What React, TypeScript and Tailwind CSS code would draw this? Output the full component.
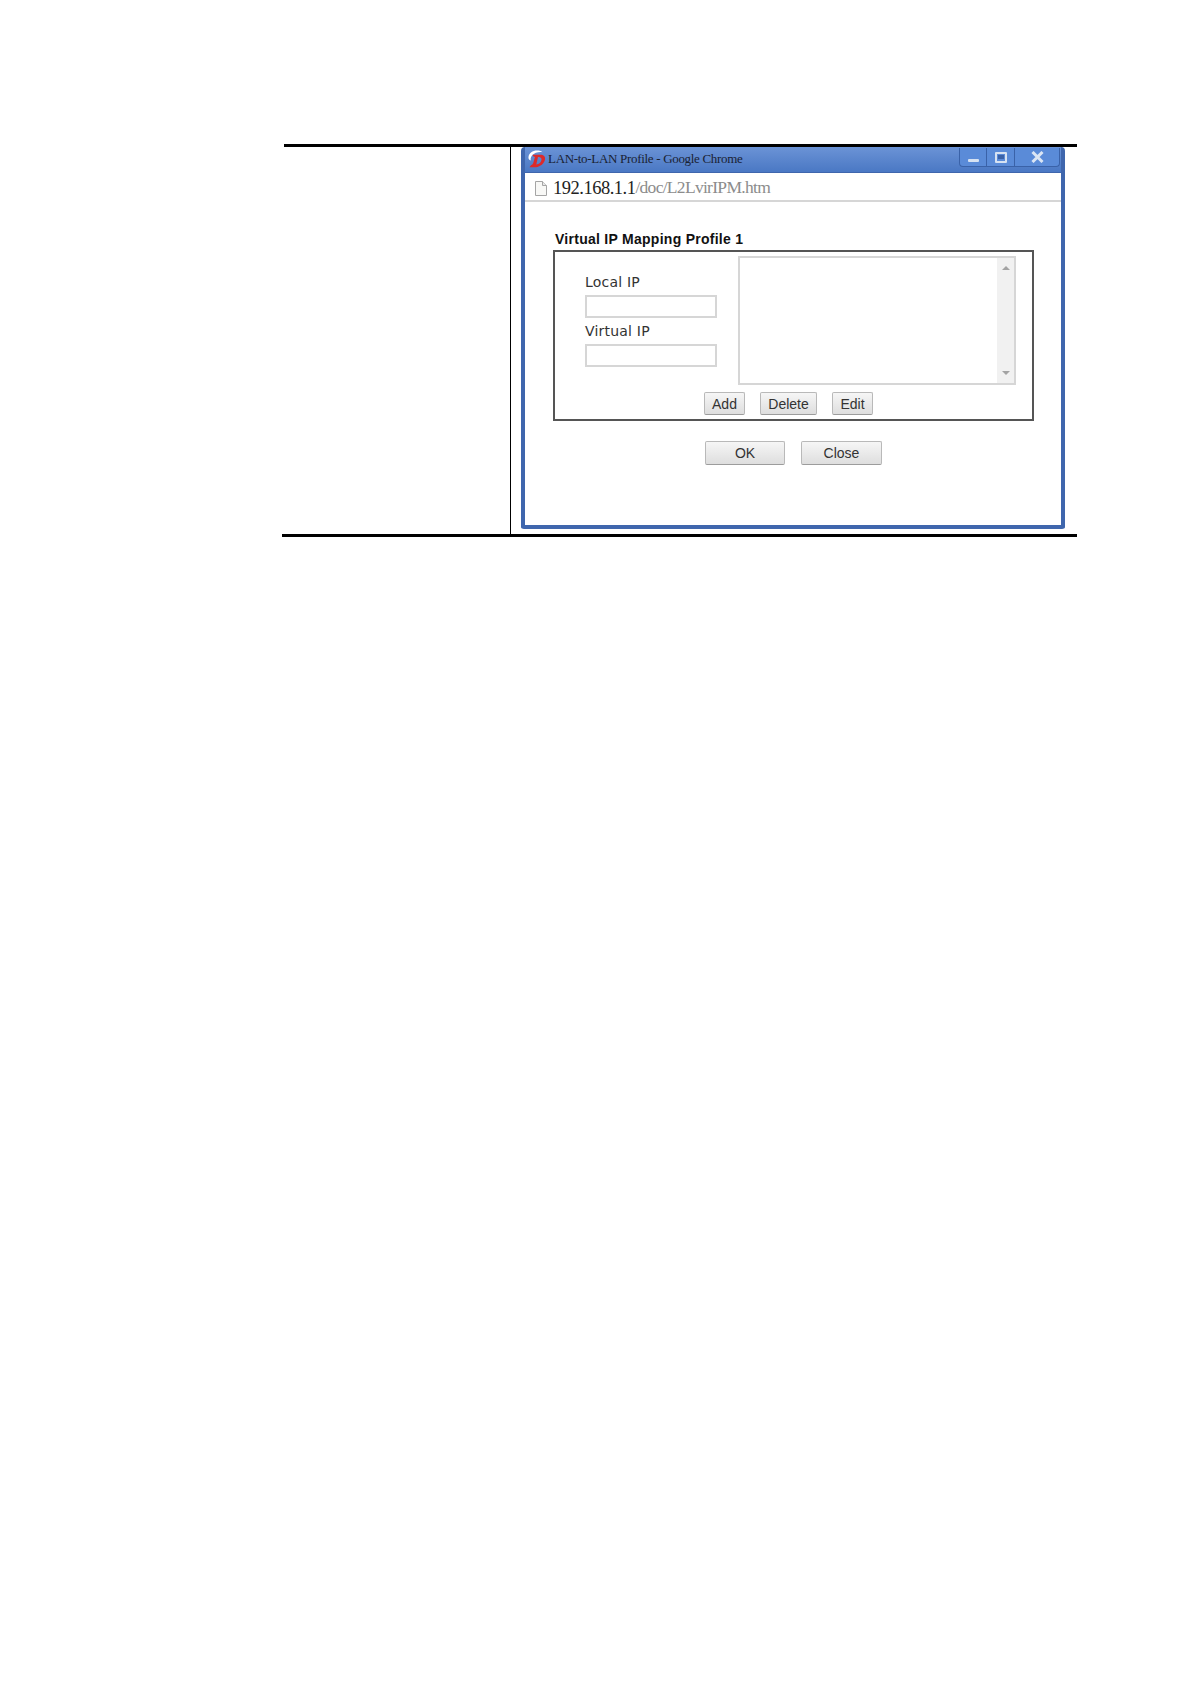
export default function App() {
  return (
    <div className="min-h-[1684px] w-[1190px] bg-white pt-[144px] pl-[282px] font-['Liberation_Sans',sans-serif]">
      <div className="w-[795px]">
        <div className="ml-[2px] h-[3px] bg-black" />
        <div className="flex h-[387px]">
          <div className="w-[229px] border-r border-black" />
          <div className="pl-[10px]">
            <ChromeWindow />
          </div>
        </div>
        <div className="h-[3px] bg-black" />
      </div>
    </div>
  );
}

function ChromeWindow() {
  return (
    <div className="flex h-[382px] w-[544px] flex-col rounded-t-[4px] rounded-b-[3px] border-x-[4px] border-b-[4px] border-[#3f66ad] bg-white">
      <TitleBar />
      <div className="flex h-[29px] items-center border-b-2 border-[#d6d6d6] bg-white pt-[3px] pl-[9px]">
        <svg width="14" height="17" viewBox="0 0 14 17" className="mr-[5px]">
          <path d="M1.5 1.5h7l4 4v10h-11z" fill="#f8f8f6" stroke="#a5a5a5" />
          <path d="M8.5 1.5v4h4" fill="#e8e8e8" stroke="#a5a5a5" />
        </svg>
        <span className="font-['Liberation_Serif',serif] text-[18.5px] leading-none tracking-[-0.5px] text-[#222]">192.168.1.1</span>
        <span className="font-['Liberation_Serif',serif] text-[17.5px] leading-none tracking-[-0.7px] text-[#8c8c8c]">/doc/L2LvirIPM.htm</span>
      </div>
      <div className="flex-1 pl-[28px]">
        <h2 className="mt-[29px] pl-[2px] text-[14px] leading-[16px] font-bold tracking-[0.27px] text-[#111]">Virtual IP Mapping Profile 1</h2>
        <ProfileBox />
        <div className="mt-[20px] flex gap-[16px] pl-[152px]">
          <PageButton label="OK" width="w-[80px]" />
          <PageButton label="Close" width="w-[81px]" />
        </div>
      </div>
    </div>
  );
}

function TitleBar() {
  return (
    <div className="flex h-[26px] items-start border-b border-[#3f66ad] bg-gradient-to-b from-[#6b93d6] to-[#4a78c4]">
      <svg width="20" height="20" viewBox="0 0 20 20" className="mt-[2px] mr-[1px] ml-[2px] shrink-0">
        <path d="M1.500 8C2 4 5.500 1.500 10 1.500c2.500 0 4.500.6 5.500 1.700C12 2.600 7.500 3.600 5 6.500 3.800 8 3.300 9.800 3.800 11.500 2.200 11 1.200 9.800 1.500 8z" fill="#fff" />
        <path d="M5.500 5.800h7.500c3.800 0 5.500 1.800 5 4.700-.7 4-4.600 7.200-9 7.700H2.500l1.500-2c1.400-.3 2-1.200 2.400-2.600l1.400-5.100c.2-.8-.5-1-1.500-1z M11 8 9.300 15.500c3-.3 4.800-2.300 5.200-4.700.3-1.900-1.300-2.900-3.500-2.800z" fill="#dd2a2a" fillRule="evenodd" />
      </svg>
      <span className="mt-[4px] font-['Liberation_Serif',serif] text-[13px] leading-[15px] tracking-[-0.31px] whitespace-nowrap text-[#1a2233]">LAN-to-LAN Profile - Google Chrome</span>
      <div className="mt-[1px] mr-[1px] ml-auto flex h-[19px] overflow-hidden rounded-b-[4px] border border-t-0 border-[#3a62a8] bg-[#5a8bd8]">
        <div className="flex w-[27px] items-end justify-center border-r border-[#3a62a8] pb-[4px]">
          <div className="h-[3px] w-[11px] rounded-[1px] bg-[#d6e2f2]" />
        </div>
        <div className="flex w-[28px] items-center justify-center border-r border-[#3a62a8]">
          <div className="flex h-[11px] w-[12px] items-center justify-center rounded-[1px] border-2 border-[#d6e2f2]">
            <div className="h-[4px] w-[6px] bg-[#3a62a8]" />
          </div>
        </div>
        <div className="flex w-[44px] items-center justify-center">
          <svg width="13" height="12" viewBox="0 0 13 12">
            <path d="M1.500 1l10 10M11.500 1l-10 10" stroke="#dbe6f4" strokeWidth="3" />
          </svg>
        </div>
      </div>
    </div>
  );
}

function ProfileBox() {
  return (
    <div className="mt-[3px] flex h-[171px] w-[481px] flex-col border-2 border-[#555] pt-[4px] pl-[30px]">
      <div className="flex h-[129px]">
        <div className="w-[153px] shrink-0 pt-[17px] font-['DejaVu_Sans',sans-serif] text-[14px] leading-[18px] tracking-[0.2px] text-[#333]">
          <div>Local IP</div>
          <div className="mt-[4px] h-[23px] w-[132px] border-2 border-[#d6d6d6] bg-white" />
          <div className="mt-[4px]">Virtual IP</div>
          <div className="mt-[4px] h-[23px] w-[132px] border-2 border-[#d6d6d6] bg-white" />
        </div>
        <div className="flex h-[129px] w-[278px] shrink-0 border-2 border-[#d6d6d6] bg-white">
          <div className="flex-1" />
          <div className="flex w-[17px] flex-col items-center justify-between bg-[#f1f1f1] py-[8px]">
            <div className="h-0 w-0 border-x-[4px] border-b-[4px] border-x-transparent border-b-[#a3a3a3]" />
            <div className="h-0 w-0 border-x-[4px] border-t-[4px] border-x-transparent border-t-[#a3a3a3]" />
          </div>
        </div>
      </div>
      <div className="mt-[7px] flex gap-[15px] pl-[119px]">
        <SmallButton label="Add" width="w-[41px]" />
        <SmallButton label="Delete" width="w-[57px]" />
        <SmallButton label="Edit" width="w-[41px]" />
      </div>
    </div>
  );
}

function SmallButton({ label, width }: { label: string; width: string }) {
  return (
    <button className={`h-[23px] ${width} rounded-[2px] border border-[#b9b9b9] border-b-[#9c9c9c] bg-gradient-to-b from-[#f6f6f6] to-[#dedede] text-[14px] leading-none text-[#333]`}>
      {label}
    </button>
  );
}

function PageButton({ label, width }: { label: string; width: string }) {
  return (
    <button className={`h-[24px] ${width} rounded-[2px] border border-[#b9b9b9] border-b-[#9c9c9c] bg-gradient-to-b from-[#f6f6f6] to-[#dedede] text-[14px] leading-none text-[#333]`}>
      {label}
    </button>
  );
}
